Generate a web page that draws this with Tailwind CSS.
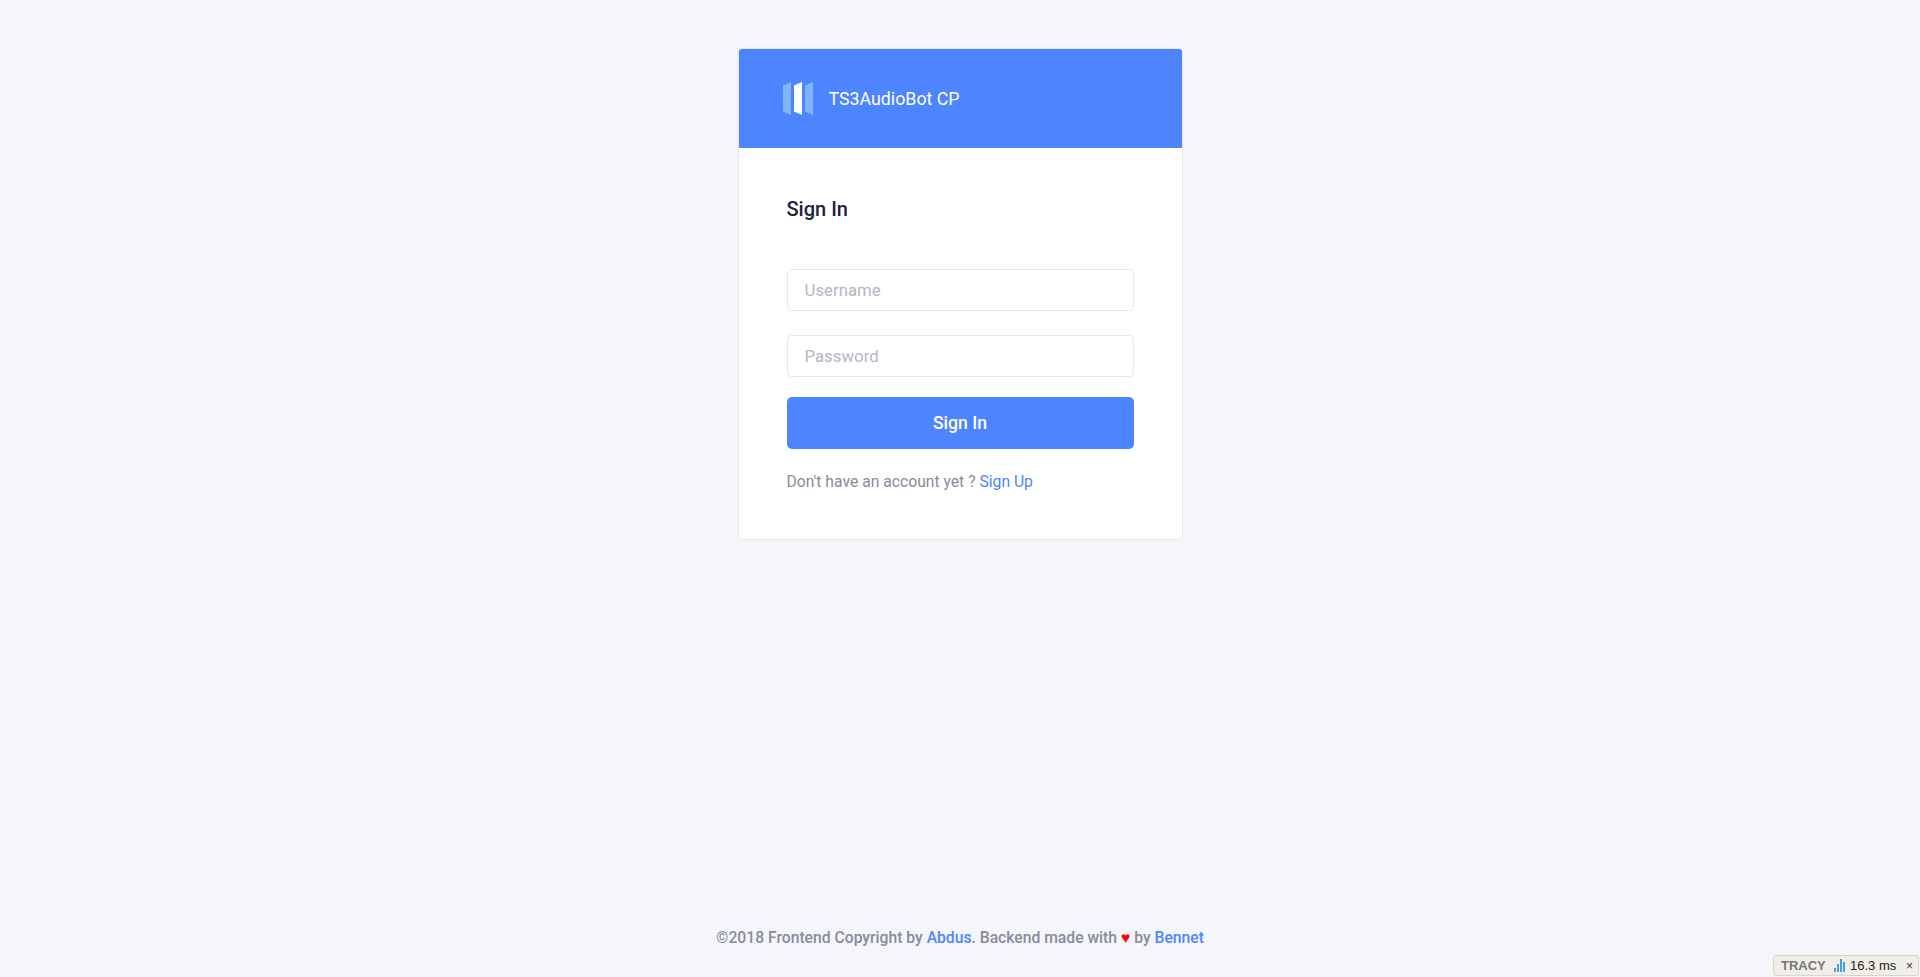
<!DOCTYPE html>
<html lang="en">
<head>
<meta charset="utf-8">
<title>TS3AudioBot CP</title>
<script src="https://cdn.jsdelivr.net/npm/@tailwindcss/browser@4"></script>
</head>
<body class="bg-[#f4f6fa] font-['Roboto',sans-serif] overflow-hidden">
<div class="relative h-[977px] flex flex-col items-center pt-[48px]">
  <div class="w-[445px] h-[492px] bg-white border border-[#e6e7f1] rounded-[4px] overflow-hidden">
    <div class="h-[100px] -mx-px -mt-px bg-[#4d84ff] flex items-center pl-[45px] gap-[16px]">
      <svg width="30" height="33" viewBox="0 0 30 33" class="shrink-0">
        <path d="M0 3.5 8 0V33L0 29.5Z" fill="#7fb5ff"/>
        <path d="M11 3.5 19 0V33L11 29.5Z" fill="#ffffff"/>
        <path d="M22 3.5 30 0V33L22 29.5Z" fill="#7fb5ff"/>
      </svg>
      <span class="pt-[2px] text-[17.8px] leading-[24px] text-white">TS3AudioBot CP</span>
    </div>
    <div class="px-[48px]">
      <h1 class="mt-[48px] text-[20px] leading-[26px] font-medium text-[#1c2140]">Sign In</h1>
      <input type="text" placeholder="Username" class="block mt-[47px] w-full h-[42px] px-[17px] bg-white border border-[#e6e7f1] rounded-[4px] text-[16.8px] placeholder:text-[#b5b5c3] outline-none">
      <input type="password" placeholder="Password" class="block mt-[24px] w-full h-[42px] px-[17px] bg-white border border-[#e6e7f1] rounded-[4px] text-[16.8px] placeholder:text-[#b5b5c3] outline-none">
      <button class="block mt-[20px] w-full h-[52px] pt-px bg-[#4d84ff] text-white rounded-[5px] text-[17.6px] font-medium">Sign In</button>
      <p class="mt-[22px] text-[15.7px] leading-[22px] text-[#888b9c]">Don't have an account yet ? <a href="#" class="text-[#4d84ff]">Sign Up</a></p>
    </div>
  </div>
  <footer class="mt-auto mb-[28px] text-[15.7px] leading-[22px] font-medium text-[#888b9c]">©2018 Frontend Copyright by <a href="#" class="text-[#4d84ff]">Abdus</a>. Backend made with <span class="text-[#ff0000]">♥</span> by <a href="#" class="text-[#4d84ff]">Bennet</a></footer>
  <div class="absolute right-[1px] bottom-[1px] h-[21px] w-[146px] flex items-center bg-[#f0eee6] border border-[#d8d6cc] rounded-[3px] font-['Liberation_Sans',sans-serif] text-[13px] text-[#333] pl-[7px]">
    <span class="font-bold text-[#777] text-[13px] w-[53px]">TRACY</span>
    <svg width="12" height="13" viewBox="0 0 12 13" class="shrink-0"><path d="M0 9h2v4H0zM3 5h2v8H3zM6 0h2v13H6zM9 3h2v10H9z" fill="#4a9be8"/></svg>
    <span class="ml-[4px] text-[#222]">16.3 ms</span>
    <span class="ml-auto mr-[5px] text-[#333] text-[12px]">×</span>
  </div>
</div>
</body>
</html>
